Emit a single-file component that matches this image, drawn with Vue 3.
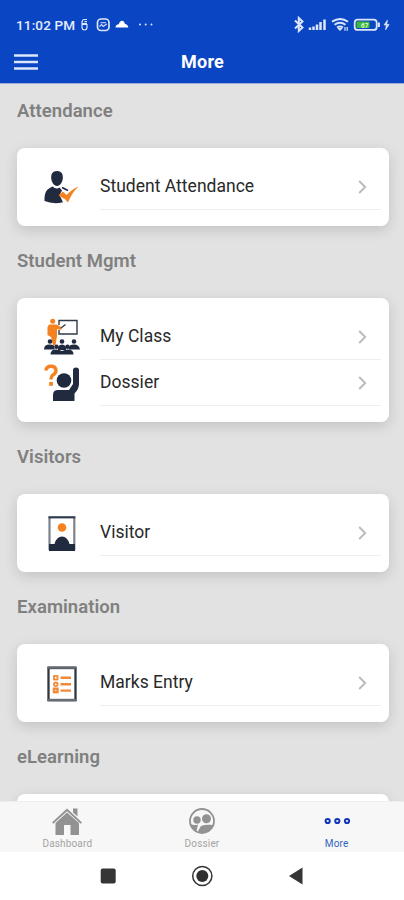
<script setup>
const sections = [
  { title: 'Attendance', rows: [{ label: 'Student Attendance', icon: 'attendance' }] },
  { title: 'Student Mgmt', rows: [{ label: 'My Class', icon: 'class' }, { label: 'Dossier', icon: 'question' }] },
  { title: 'Visitors', rows: [{ label: 'Visitor', icon: 'visitor' }] },
  { title: 'Examination', rows: [{ label: 'Marks Entry', icon: 'marks' }] },
  { title: 'eLearning', rows: [] },
]
</script>

<template>
  <div class="phone">
    <header>
      <div class="status">
        <span class="time">11:02 PM</span>
        <svg class="left-icons" width="80" height="18" viewBox="78 16 80 18" fill="none" stroke="#dbe6fb">
          <path d="M87 19.500h-2.500q-2.500 0-2.500 3v4.500q0 3 2.500 3t2.500-3v-2.500h-4.500M82 23.500h5M84.500 21.700h2.500" stroke-width="1.200" />
          <rect x="97.500" y="19" width="11.500" height="11.500" rx="3.500" stroke-width="1.700" />
          <path d="M99.500 26.500l2.200-2 1.500 2 3.500-2.500M100.500 22.700h5.500" stroke-width="1.100" />
          <path d="M115.500 27.500q0-3 3.300-3.300 1.200-4.500 4.300-3.300 1.400.6 1.700 2.800 3 .5 3.500 3.800z" fill="#fff" stroke="none" />
          <g fill="#dbe6fb" stroke="none"><circle cx="140" cy="24.500" r="1" /><circle cx="145.700" cy="24.500" r="1" /><circle cx="151.500" cy="24.500" r="1" /></g>
        </svg>
        <svg class="right-icons" width="100" height="18" viewBox="292 16 100 18" fill="none" stroke="#dbe6fb">
          <path d="M295 20.500l7.500 7-3.700 3.500V18l3.700 3.500-7.500 7" stroke-width="2" />
          <path d="M310 27.500v2.500M313.500 26.500v3.500M317 24.500V30M320.500 22V30M324.500 19.500V30" stroke-width="2.500" />
          <path d="M332 21.700q8.500-5.500 16 0M334.500 24.700q5.500-3.800 11 0M337 27.500q3-2.200 6 0" stroke-width="2" />
          <path d="M338 28.500l2 2 2-2z" fill="#dbe6fb" />
          <path d="M345 27v3.700M347.200 30.700V27" stroke-width="1.200" />
          <rect x="354.700" y="19.700" width="22" height="10.200" rx="3" stroke-width="1.800" />
          <rect x="356.500" y="21.500" width="13" height="6.600" rx="1" fill="#40b738" stroke="none" />
          <path d="M378.900 22.500v4.500" stroke-width="2" />
          <text x="361" y="27.500" class="battery" stroke="none">67</text>
          <path d="M387.500 20l-3.500 5h2.300l-.8 5 3.700-5.500h-2.400z" fill="#dbe6fb" stroke="#dbe6fb" stroke-width=".6" />
        </svg>
      </div>
      <div class="bar">
        <svg class="menu" width="24" height="16" viewBox="0 0 24 16"><path d="M0 1.500h24M0 8h24M0 14.500h24" stroke="#dce6fb" stroke-width="2.500" /></svg>
        <h1>More</h1>
      </div>
    </header>

    <main>
      <section v-for="s in sections" :key="s.title">
        <h2>{{ s.title }}</h2>
        <div class="card">
          <div v-for="r in s.rows" :key="r.label" class="row">
            <svg class="icon" width="36" height="38" viewBox="0 0 36 38">
              <g v-if="r.icon === 'attendance'">
                <path d="M13 3c4.500 0 6 3 5.800 7-.3 4-2.500 8-5.800 8s-5.500-4-5.800-8C7 6 8.500 3 13 3z" fill="#202b40" />
                <path d="M8.500 18.500q4 3.500 7 1l2.500 3-2.500 4.500 3.500 7.300Q9 36.500.5 33c0-8 1-11.500 8-14.500z" fill="#202b40" />
                <path d="M18 19.500l6 3" stroke="#202b40" stroke-width="1.600" />
                <path d="M14.500 27.500l4.500-4 3.500 3.500q5.500-6 12-8.500-6.500 6-10.500 16-3.500-4.500-9.500-7z" fill="#f58220" />
              </g>
              <g v-else-if="r.icon === 'class'">
                <circle cx="8.700" cy="3.300" r="2.500" fill="#f58220" />
                <path d="M5 6.500h7.500l5.500 3-1 2.500-4-1v7l-1.500 9H9L7 19l-3.500-2V9z" fill="#f58220" />
                <path d="M15 7V2.500h18v13.500H15v-4M17 10l4.500-3.500" fill="none" stroke="#303a4c" stroke-width="1.400" />
                <g fill="#202b40">
                  <circle cx="6" cy="23.500" r="2.300" /><circle cx="18" cy="23.500" r="2.300" /><circle cx="30" cy="23.500" r="2.300" />
                  <path d="M0 31.500q0-5 5.500-5t5 3v2zM25 31.500v-2q0-3 5-3t6 5zM14 29q1-2.500 4-2.500t4 2.500v3h-8z" />
                  <circle cx="12.500" cy="28.700" r="2.200" /><circle cx="23.500" cy="28.700" r="2.200" />
                  <path d="M6.500 36.500q0-5 5.500-5 3.500 0 6 1.500 2.500-1.500 6-1.500 5.500 0 5.500 5z" />
                </g>
              </g>
              <g v-else-if="r.icon === 'question'">
                <path d="M1.800 6.500Q2.500 2.200 7 2.200q5 0 5 4.300 0 3-3.500 4.800Q7 12.500 7 15.500" fill="none" stroke="#f58220" stroke-width="3.400" />
                <rect x="5.200" y="18" width="3.700" height="3.800" fill="#f58220" />
                <circle cx="20" cy="16.500" r="7.300" fill="#202b40" />
                <path d="M9 37V31q0-5 5-5h11l4-6V6q0-2.500 3-2.500t3 2.500v14q0 5-4.500 9.500V37z" fill="#202b40" />
              </g>
              <g v-else-if="r.icon === 'visitor'">
                <path d="M5.500 3.500V36M30.300 3.500V36" stroke="#7d838c" stroke-width="2.200" />
                <path d="M4.400 3.300h27" stroke="#303b4d" stroke-width="2.200" />
                <circle cx="18" cy="13.500" r="4.300" fill="#f58220" />
                <path d="M5 37V30h5.500Q12.500 22.500 18 22.500t7.500 7.500H31v7z" fill="#202b40" />
              </g>
              <g v-else-if="r.icon === 'marks'">
                <rect x="4.500" y="4" width="27" height="32" fill="#fff" stroke="#303744" stroke-width="2.300" />
                <path d="M3.500 3.500h29M3.500 36.200h29" stroke="#686d75" stroke-width="2.500" />
                <g fill="none" stroke="#f08a38"><rect x="10" y="12" width="3.500" height="3.500" stroke-width="1.800" /><circle cx="11.800" cy="20.300" r="1.800" stroke-width="1.800" /><rect x="10" y="24.700" width="3.500" height="3.500" stroke-width="2.400" />
                  <path d="M16.500 13.800H27M16.500 20.200H27M16.500 26.600H27" stroke-width="2.400" /></g>
              </g>
            </svg>
            <div class="body">
              <span>{{ r.label }}</span>
              <svg width="9" height="14" viewBox="0 0 9 14"><path d="M1.200 1l6 6-6 6" fill="none" stroke="#b9b9b9" stroke-width="1.800" /></svg>
            </div>
          </div>
        </div>
      </section>
    </main>

    <nav class="tabs">
      <div class="tab">
        <svg width="32" height="30" viewBox="0 0 32 30" fill="#929292">
          <path d="M1 16.500L16 2.500 31 16.500l-1.300 1.300L16 5.200 2.300 17.800z" /><path d="M22 2.500h4.500v8L22 6.500z" />
          <path d="M4.500 17L16 6.500 28 17v12h-8.500V19h-6.500v10H4.500z" />
        </svg>
        <span>Dashboard</span>
      </div>
      <div class="tab">
        <svg width="32" height="30" viewBox="0 0 32 30">
          <circle cx="16" cy="15" r="12" fill="none" stroke="#929292" stroke-width="1.800" />
          <g fill="#929292"><circle cx="11" cy="14" r="3.700" /><circle cx="20.500" cy="12.800" r="4.500" />
            <path d="M4.500 18q3.500 1.800 7.500.5l-1.500 6.500q-4.500-1.500-6-7zM12 25l3-5q5-2 12.500-1-2.500 7.500-11.500 8-2.500 0-4-2z" /></g>
        </svg>
        <span>Dossier</span>
      </div>
      <div class="tab active">
        <svg width="32" height="30" viewBox="0 0 32 30" fill="none" stroke="#1238b8" stroke-width="2"><circle cx="6.700" cy="15" r="2.100" /><circle cx="16.300" cy="15" r="2.100" /><circle cx="26" cy="15" r="2.100" /></svg>
        <span>More</span>
      </div>
    </nav>

    <footer>
      <svg width="24" height="24" viewBox="0 0 24 24"><rect x="4.700" y="4.500" width="15" height="15" rx="2" fill="#353535" /></svg>
      <svg width="24" height="24" viewBox="0 0 24 24"><circle cx="12.300" cy="12" r="9.600" fill="none" stroke="#353535" stroke-width="1.500" /><circle cx="12.300" cy="12" r="6" fill="#303030" /></svg>
      <svg width="24" height="24" viewBox="0 0 24 24"><path d="M5 12L18.500 3.500v17z" fill="#353535" /></svg>
    </footer>
  </div>
</template>

<style>
body { margin: 0; overflow: hidden; }
</style>

<style scoped>
.phone { width: 404px; height: 900px; display: flex; flex-direction: column; overflow: hidden; background: #e2e2e2; font-family: Roboto, "Liberation Sans", sans-serif; }
header { height: 83px; flex: none; background: #0a45c3; color: #fff; border-bottom: 1px solid #9aaedb; }
.status { height: 41px; padding: 8px 12px 0 16px; display: flex; align-items: center; box-sizing: border-box; }
.time { width: 62px; font-size: 13.5px; font-weight: 500; letter-spacing: .15px; white-space: nowrap; color: #e5edff; }
.right-icons { margin-left: auto; }
.battery { font: 700 6.5px Roboto, sans-serif; fill: #d5f7d5; }
.bar { display: grid; grid-template-columns: 1fr auto 1fr; align-items: center; height: 41px; padding: 0 13px 0 14px; }
h1 { margin: 0; font-size: 18px; line-height: 24px; font-weight: 700; letter-spacing: .2px; }
main { flex: 1; min-height: 0; overflow: hidden; }
section { padding-bottom: 8px; }
h2 { margin: 0; padding: 15px 17px 25px; font-size: 18.500px; line-height: 24px; font-weight: 600; letter-spacing: .05px; color: #808080; }
.card { min-height: 46px; margin: 0 15px 0 17px; padding: 16px 8px 16px 27px; border-radius: 8px; background: #fff; box-shadow: 0 4px 14px rgba(0, 0, 0, .14); }
.row { height: 46px; display: flex; align-items: center; gap: 20px; }
.icon { flex: none; }
.body { flex: 1; height: 46px; box-sizing: border-box; border-bottom: 1px solid #eee; display: flex; align-items: center; justify-content: space-between; padding-right: 14px; font-size: 17.500px; letter-spacing: .02px; color: #292929; }
.body span { line-height: 22px; padding-bottom: 1px; }
.tabs { height: 50px; flex: none; display: grid; grid-template-columns: repeat(3, 1fr); background: #f7f7f7; border-top: 1px solid #eee; }
.tab { display: flex; flex-direction: column; align-items: center; padding-top: 4px; color: #a3a3a3; font-size: 10px; line-height: 14px; letter-spacing: .15px; }
.tab span { margin-top: 1px; }
.active { color: #3465bd; }
footer { height: 48px; flex: none; background: #fff; display: flex; justify-content: center; gap: 70px; align-items: center; }
</style>
